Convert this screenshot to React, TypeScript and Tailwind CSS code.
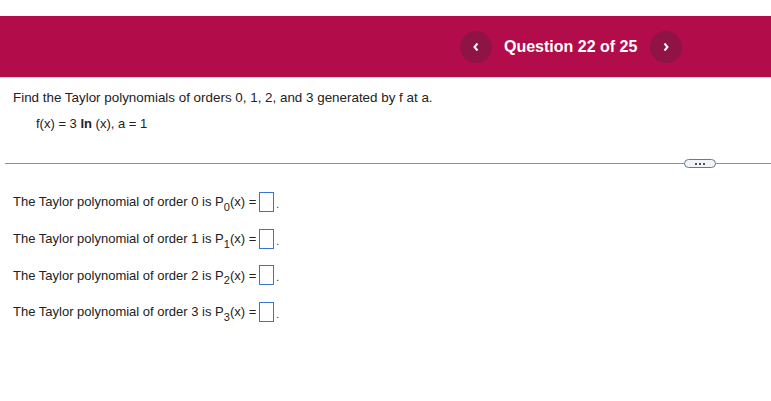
export default function App() {
  const rows = ['0', '1', '2', '3']

  return (
    <div className="w-[771px] h-[401px] bg-white font-['Liberation_Sans',Arial,sans-serif] text-[#222] overflow-hidden">
      <div className="h-[16px]" />
      <div className="h-[62px] bg-[#b20c4a] flex items-center pl-[460px] border-b border-[#d8d8d8]">
        <button className="w-[32px] h-[32px] rounded-full bg-[#8f1344] flex items-center justify-center">
          <svg width="8" height="10" viewBox="0 0 8 10">
            <path d="M5.5 1.5 L2.5 5 L5.5 8.5" fill="none" stroke="#fff" strokeWidth="2" />
          </svg>
        </button>
        <span className="ml-[12px] text-white font-bold text-[16px] leading-none">Question 22 of 25</span>
        <button className="ml-[13px] w-[32px] h-[32px] rounded-full bg-[#8f1344] flex items-center justify-center">
          <svg width="8" height="10" viewBox="0 0 8 10">
            <path d="M2.5 1.5 L5.5 5 L2.5 8.5" fill="none" stroke="#fff" strokeWidth="2" />
          </svg>
        </button>
      </div>

      <div className="pl-[13px] pt-[12px] text-[13px] leading-[15px]">
        <p className="text-[13.4px]">Find the Taylor polynomials of orders 0, 1, 2, and 3 generated by f at a.</p>
        <p className="pl-[23px] mt-[11px]">
          f(x) = 3 <span className="font-bold">ln</span> (x), a = 1
        </p>
      </div>

      <div className="ml-[5px] mt-[28px] flex items-center">
        <div className="flex-1 h-px bg-[#8795a6]" />
        <div className="mx-[-1px] w-[32px] h-[9px] rounded-full border border-[#6a7a8e] bg-[#f2f4f7] flex items-center justify-center gap-[2px]">
          <span className="w-[2px] h-[2px] bg-[#40506a]" />
          <span className="w-[2px] h-[2px] bg-[#40506a]" />
          <span className="w-[2px] h-[2px] bg-[#40506a]" />
        </div>
        <div className="w-[56px] h-px bg-[#8795a6]" />
      </div>

      <div className="pl-[13px] pt-[24px] flex flex-col gap-[16.7px] text-[13px]">
        {rows.map((n) => (
          <div key={n} className="flex items-center h-[20px]">
            <span>
              The Taylor polynomial of order {n} is P<sub className="text-[11px] align-[-2px]">{n}</sub>(x) =
            </span>
            <span className="ml-[3px] w-[15px] h-[20px] border border-[#3b73d0] bg-white" />
            <span className="ml-[2px] self-end mb-[2px] text-[10px] leading-none">.</span>
          </div>
        ))}
      </div>
    </div>
  )
}
